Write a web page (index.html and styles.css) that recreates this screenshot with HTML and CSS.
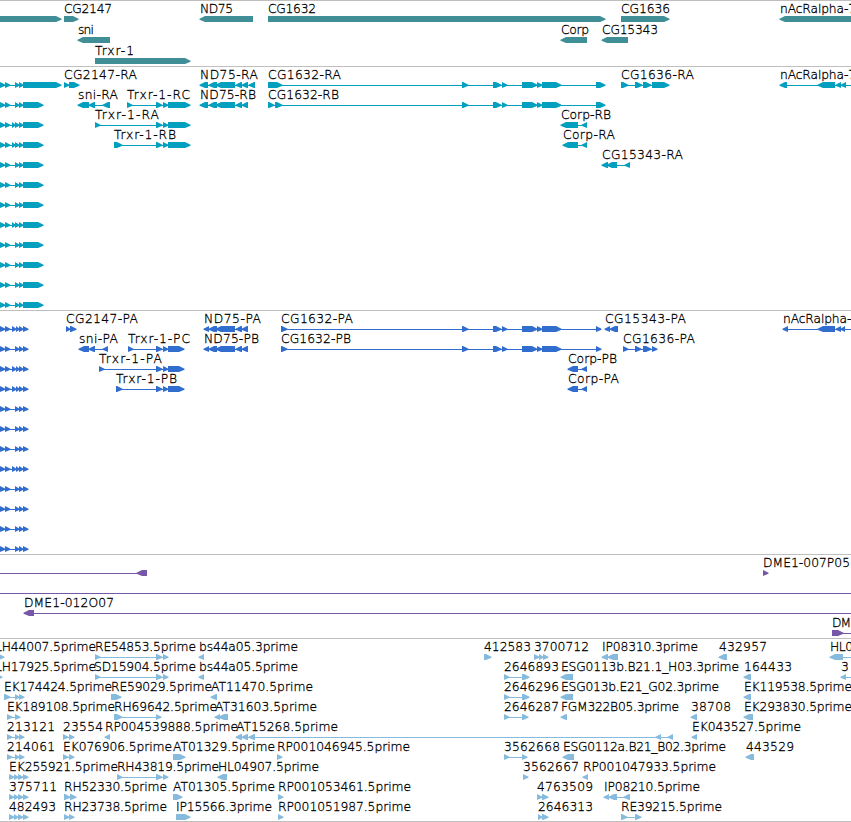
FILE: index.html
```html
<!DOCTYPE html>
<html lang="en">
<head>
<meta charset="UTF-8">
<title>Genome browser</title>
<link rel="stylesheet" href="styles.css">
</head>
<body>
<div class="browser">
  <svg class="track track-gene" id="genes"></svg>
  <svg class="track track-transcript" id="transcripts"></svg>
  <svg class="track track-protein" id="proteins"></svg>
  <svg class="track track-clone" id="clones"></svg>
  <svg class="track track-est" id="ests"></svg>
</div>
<script src="tracks.js"></script>
</body>
</html>
```
FILE: styles.css
```css
html{background:#fff}
body{margin:0;overflow:hidden}
.browser{display:flex;flex-direction:column;width:851px;border-bottom:1px solid #bfbfbf}

.track{display:block;width:851px;box-sizing:border-box;border-top:1px solid #bfbfbf;overflow:hidden;flex:none}
.track text{font-family:"DejaVu Sans",sans-serif;font-size:12.3px;font-weight:200;fill:#000;stroke:#000;stroke-width:.3px}

/* heights follow the number of rows in each track */
.track-gene{height:66px;color:#408e96}
.track-transcript{height:244px;color:#039fbf}
.track-protein{height:244px;color:#316dce}
.track-clone{height:84px;color:#7757a7}
.track-est{height:183px;color:#87bbdd}

.exon,.intron{fill:currentColor}
```
FILE: tracks.js
```js
const SVG_NS = "http://www.w3.org/2000/svg";

// feature: [row, strand, label, label start, label end, exons]
const genes = [
  [0, "+", "", 0, 0, [[-5,61]]],
  [0, "+", "CG2147", 64, 112, [[64,78]]],
  [1, "-", "sni", 78, 94, [[78,110]]],
  [2, "+", "Trxr-1", 95, 134, [[95,190]]],
  [0, "-", "ND75", 200, 233, [[200,253]]],
  [0, "+", "CG1632", 268, 316, [[268,605]]],
  [1, "-", "Corp", 561, 589, [[561,587]]],
  [1, "-", "CG15343", 602, 658, [[602,628]]],
  [0, "+", "CG1636", 621, 670, [[621,669]]],
  [0, "-", "nAcRalpha-7", 780, 856, [[780,870]]]
];

const trxr = [[156,162],[163,168],[168,190]];
const cg1632 = [[462,468],[493,501],[502,507],[522,537],[537,542],[542,561]];
const nd75 = [[209,217],[216,235],[236,242],[242,248]];

const transcripts = [
  [0, "+", "CG2147-RA", 64, 137, [[64,69],[69,79]]],
  [0, "-", "ND75-RA", 200, 258, [[200,208],...nd75,[249,255]]],
  [0, "+", "CG1632-RA", 268, 341, [[268,282],...cg1632,[596,605]]],
  [0, "+", "CG1636-RA", 621, 694, [[621,628],[635,642],[643,651],[652,669]]],
  [0, "-", "nAcRalpha-7", 780, 856, [[780,787],[818,835],[836,841],[841,846],[858,865]]],
  [1, "-", "sni-RA", 78, 118, [[78,89],[89,95],[103,110]]],
  [1, "+", "Trxr-1-RC", 127, 190, [[127,132],...trxr]],
  [1, "-", "ND75-RB", 200, 256, [[200,208],...nd75]],
  [1, "+", "CG1632-RB", 268, 339, [[268,274],[275,282],...cg1632,[596,605]]],
  [2, "+", "Trxr-1-RA", 95, 159, [[95,100],...trxr]],
  [2, "-", "Corp-RB", 561, 611, [[561,578],[582,587]]],
  [3, "+", "Trxr-1-RB", 114, 176, [[114,122],...trxr]],
  [3, "-", "Corp-RA", 563, 615, [[563,578],[582,587]]],
  [4, "-", "CG15343-RA", 602, 683, [[602,608],[607,617],[625,630]]]
];

const trxrP = [[156,162],[163,168],[168,184]];
const proteins = [
  [0, "+", "CG2147-PA", 66, 138, [[66,70],[70,76]]],
  [0, "-", "ND75-PA", 204, 261, [[204,209],...nd75]],
  [0, "+", "CG1632-PA", 281, 353, [[281,287],...cg1632,[596,601]]],
  [0, "-", "CG15343-PA", 605, 686, [[605,610],[610,618]]],
  [0, "-", "nAcRalpha-7", 783, 859, [[783,788],[818,835],[836,841],[841,845],[858,865]]],
  [1, "-", "sni-PA", 79, 118, [[79,89],[89,95],[103,108]]],
  [1, "+", "Trxr-1-PC", 128, 190, [[128,133],...trxrP]],
  [1, "-", "ND75-PB", 204, 259, [[204,209],...nd75]],
  [1, "+", "CG1632-PB", 281, 351, [[281,287],...cg1632,[596,601]]],
  [1, "+", "CG1636-PA", 623, 695, [[623,628],[635,641],[643,651],[652,657]]],
  [2, "+", "Trxr-1-PA", 99, 162, [[99,104],...trxrP]],
  [2, "-", "Corp-PB", 568, 617, [[568,578],[582,587]]],
  [3, "+", "Trxr-1-PB", 116, 177, [[116,122],...trxrP]],
  [3, "-", "Corp-PA", 568, 619, [[568,578],[582,587]]]
];

// isoforms of the gene that runs off the left edge
const shortRows = [2, 3, 7];
for (let row = 0; row < 12; row++) {
  const start = shortRows.includes(row) ? [[12,15],[15,19],[19,23]] : [[15,19],[19,23]];
  transcripts.push([row, "+", "", 0, 0, [[0,5],[5,10],...start,[23,row === 0 ? 61 : 43]]]);
  const startP = [0, 2, 3, 7].includes(row) ? [[12,16],[16,19],[19,23]] : [[15,19],[19,23]];
  proteins.push([row, "+", "", 0, 0, [[0,5],[5,10],...startP,[23,28]]]);
}

const clones = [
  [0, "-", "", 0, 0, [[-20,-10],[137,147]]],
  [0, "+", "DME1-007P05", 763, 850, [[763,768]]],
  [1, "+", "", 0, 0, [[-20,-10],[860,870]]],
  [2, "-", "DME1-012O07", 24, 114, [[24,34],[860,870]]],
  [3, "+", "DM", 832, 851, [[832,843],[860,870]]]
];

const ests = [
  [0, "+", "LH44007.5prime", -5, 96, [[-1,4]]],
  [0, "+", "RE54853.5prime", 95, 196, [[95,100],[156,162],[163,168]]],
  [0, "-", "bs44a05.3prime", 199, 298, [[199,204]]],
  [0, "+", "412583", 484, 531, [[484,491]]],
  [0, "+", "3700712", 534, 589, [[534,539],[539,543],[543,548]]],
  [0, "-", "IP08310.3prime", 602, 698, [[602,608],[608,618]]],
  [0, "-", "432957", 719, 767, [[719,727]]],
  [0, "-", "HL0", 830, 853, [[830,843],[860,870]]],
  [1, "+", "LH17925.5prime", -5, 96, [[-3,2]]],
  [1, "+", "SD15904.5prime", 94, 196, [[95,100],[156,162],[163,168]]],
  [1, "-", "bs44a05.5prime", 199, 298, [[199,204]]],
  [1, "+", "2646893", 504, 559, [[504,509],[522,529]]],
  [1, "-", "ESG0113b.B21.1_H03.3prime", 561, 739, [[561,573]]],
  [1, "-", "164433", 744, 792, [[744,751]]],
  [1, "-", "3", 841, 848, [[841,846],[860,870]]],
  [2, "+", "EK174424.5prime", 4, 112, [[4,10],[15,19],[19,24]]],
  [2, "+", "RE59029.5prime", 111, 212, [[111,121]]],
  [2, "-", "AT11470.5prime", 211, 313, [[211,217]]],
  [2, "+", "2646296", 504, 559, [[504,509],[522,529]]],
  [2, "-", "ESG013b.E21_G02.3prime", 561, 719, [[561,573]]],
  [2, "-", "EK119538.5prime", 744, 852, [[744,751]]],
  [3, "+", "EK189108.5prime", 7, 115, [[7,12],[15,20]]],
  [3, "+", "RH69642.5prime", 114, 217, [[114,122],[156,161]]],
  [3, "-", "AT31603.5prime", 215, 317, [[215,220],[219,228]]],
  [3, "+", "2646287", 504, 559, [[504,509],[522,528]]],
  [3, "-", "FGM322B05.3prime", 561, 679, [[561,567]]],
  [3, "-", "38708", 691, 731, [[691,697]]],
  [3, "-", "EK293830.5prime", 744, 852, [[744,753]]],
  [4, "+", "213121", 7, 55, [[7,12],[15,19],[19,24]]],
  [4, "+", "23554", 63, 103, [[63,68],[69,74]]],
  [4, "-", "RP004539888.5prime", 105, 238, [[105,110]]],
  [4, "-", "AT15268.5prime", 236, 338, [[236,242],[242,248],[249,255],[656,661],[668,673]]],
  [4, "-", "EK043527.5prime", 692, 801, [[692,697]]],
  [5, "+", "214061", 7, 55, [[7,12],[15,19],[19,24]]],
  [5, "+", "EK076906.5prime", 63, 172, [[63,68],[69,74]]],
  [5, "+", "AT01329.5prime", 173, 275, [[173,185]]],
  [5, "+", "RP001046945.5prime", 277, 410, [[277,282]]],
  [5, "+", "3562668", 504, 560, [[504,509],[522,527]]],
  [5, "-", "ESG0112a.B21_B02.3prime", 563, 726, [[563,574]]],
  [5, "-", "443529", 746, 794, [[746,754]]],
  [6, "+", "EK255921.5prime", 9, 118, [[9,14],[14,18],[18,23],[23,28]]],
  [6, "+", "RH43819.5prime", 117, 219, [[117,122],[156,162],[163,168]]],
  [6, "-", "HL04907.5prime", 218, 319, [[218,227]]],
  [6, "+", "3562667", 523, 579, [[523,528]]],
  [6, "-", "RP001047933.5prime", 583, 716, [[583,588]]],
  [7, "+", "375711", 9, 57, [[9,14],[14,18],[18,23],[23,28]]],
  [7, "+", "RH52330.5prime", 64, 167, [[64,70],[70,76]]],
  [7, "+", "AT01305.5prime", 173, 275, [[173,182]]],
  [7, "+", "RP001053461.5prime", 278, 411, [[278,283]]],
  [7, "+", "4763509", 537, 593, [[537,542],[542,548]]],
  [7, "-", "IP08210.5prime", 604, 700, [[604,609],[609,617],[624,630]]],
  [8, "+", "482493", 9, 56, [[9,14],[14,18],[18,23],[23,28]]],
  [8, "+", "RH23738.5prime", 64, 167, [[64,69],[69,74]]],
  [8, "+", "IP15566.3prime", 176, 272, [[176,190]]],
  [8, "+", "RP001051987.5prime", 278, 411, [[278,283]]],
  [8, "+", "2646313", 538, 593, [[538,542],[542,548]]],
  [8, "+", "RE39215.5prime", 621, 722, [[621,627],[635,641]]]
];

function add(svg, name, attrs) {
  const el = document.createElementNS(SVG_NS, name);
  Object.entries(attrs).forEach(([k, v]) => el.setAttribute(k, v));
  svg.appendChild(el);
  return el;
}

// 6px high box that ends in an arrow head on the side of the strand
function exonPoints(a, b, y, strand) {
  const head = Math.min(5, b - a);
  if (strand === "+") {
    const n = b - head;
    return `${a},${y} ${n},${y} ${b + .5},${y + 2.7} ${b + .5},${y + 3.7} ${n},${y + 6} ${a},${y + 6}`;
  }
  const n = a + head;
  return `${b},${y} ${n},${y} ${a - .5},${y + 2.7} ${a - .5},${y + 3.7} ${n},${y + 6} ${b},${y + 6}`;
}

function drawTrack(id, features, pitch) {
  const svg = document.getElementById(id);
  features.forEach(([row, strand, label, x1, x2, exons]) => {
    const y = row * pitch;
    if (exons.length > 1) {
      const from = exons[0][0];
      const to = exons[exons.length - 1][1];
      add(svg, "rect", { class: "intron", x: from, y: y + 18, width: to - from, height: 1 });
    }
    exons.forEach(([a, b]) => {
      add(svg, "polygon", { class: "exon", points: exonPoints(a, b, y + 15, strand) });
    });
    if (label) {
      const text = add(svg, "text", { x: x1, y: y + 12, textLength: x2 - x1 });
      text.textContent = label;
    }
  });
}

drawTrack("genes", genes, 21);
drawTrack("transcripts", transcripts, 20);
drawTrack("proteins", proteins, 20);
drawTrack("clones", clones, 20);
drawTrack("ests", ests, 20);
```
